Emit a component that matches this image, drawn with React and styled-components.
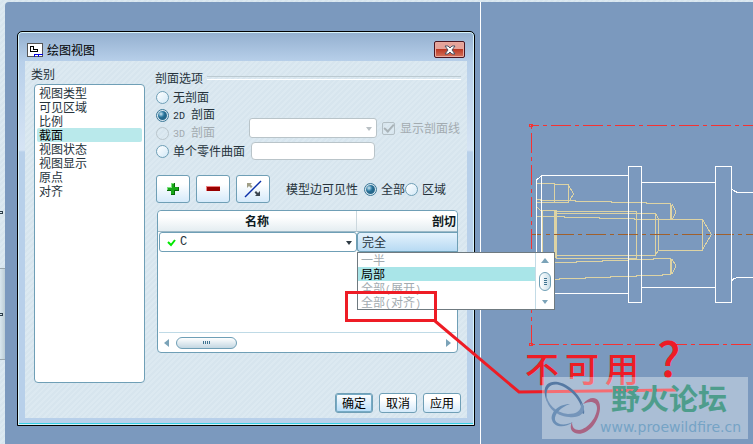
import { useState } from 'react';
import styled, { createGlobalStyle } from 'styled-components';

const categories = ['视图类型', '可见区域', '比例', '截面', '视图状态', '视图显示', '原点', '对齐'];

const cutTypes = [
  { name: '一半', disabled: true },
  { name: '局部' },
  { name: '全部', suffix: '展开', disabled: true },
  { name: '全部', suffix: '对齐', disabled: true },
];

function Radio({ name, value, current, onChange, disabled, children }) {
  return (
    <RadioLabel $disabled={disabled}>
      <RadioInput type="radio" name={name} value={value} disabled={disabled}
        checked={current === value} onChange={() => onChange(value)} />
      <span>{children}</span>
    </RadioLabel>
  );
}

function Arrow({ dir, color = '#7ba3b8' }) {
  const points = {
    left: '6,0 6,8 1,4',
    right: '1,0 1,8 6,4',
    up: '0,6 8,6 4,1',
    down: '1,2 7,2 4,6',
  };
  const flat = dir === 'up' || dir === 'down';
  return (
    <svg width={flat ? 8 : 7} height={flat ? 7 : 8}>
      <polygon points={points[dir]} fill={color} />
    </svg>
  );
}

function Categories() {
  const [active, setActive] = useState('截面');
  return (
    <Side>
      <Caption>类别</Caption>
      <CategoryList>
        {categories.map(item => (
          <li key={item}>
            <CategoryItem type="button" $active={item === active} onClick={() => setActive(item)}>
              {item}
            </CategoryItem>
          </li>
        ))}
      </CategoryList>
    </Side>
  );
}

function SectionOptions() {
  const [section, setSection] = useState('2d');
  return (
    <section>
      <GroupTitle>剖面选项</GroupTitle>
      <OptionsRow>
        <Radios>
          <Radio name="section" value="none" current={section} onChange={setSection}>无剖面</Radio>
          <Radio name="section" value="2d" current={section} onChange={setSection}>
            <Latin>2D </Latin>剖面
          </Radio>
          <Radio name="section" value="3d" current={section} onChange={setSection} disabled>
            <Latin>3D </Latin>剖面
          </Radio>
          <Radio name="section" value="part" current={section} onChange={setSection}>单个零件曲面</Radio>
        </Radios>
        <Fields>
          <FieldLine>
            <SelectBox>
              <Select aria-label="3D 剖面" disabled />
              <Arrow dir="down" color="#b9c0c4" />
            </SelectBox>
            <CheckLabel>
              <CheckInput type="checkbox" defaultChecked disabled />
              显示剖面线
            </CheckLabel>
          </FieldLine>
          <TextInput aria-label="单个零件曲面" disabled />
        </Fields>
      </OptionsRow>
    </section>
  );
}

function Toolbar() {
  const [edges, setEdges] = useState('all');
  return (
    <Tools>
      <ToolButton type="button" aria-label="添加">
        <svg width="14" height="14" shapeRendering="crispEdges">
          <path d="M5 1h4v4h4v4h-4v4h-4v-4h-4v-4h4z" fill="#0a6a0a" />
          <path d="M5 1h3v4h4v3h-4v4h-3v-4h-4v-3h4z" fill="#18a818" />
          <path d="M5 1h3v1h-2v4h-4v2h-1v-3h4z" fill="#7de07d" />
        </svg>
      </ToolButton>
      <ToolButton type="button" aria-label="删除">
        <svg width="14" height="14" shapeRendering="crispEdges">
          <rect y="4" width="14" height="5" fill="#f08080" />
          <rect x="1" y="5" width="13" height="4" fill="#980000" />
        </svg>
      </ToolButton>
      <ToolButton type="button" aria-label="反向">
        <svg width="18" height="18">
          <path d="M1 17L17 1" stroke="#0a2fa8" strokeWidth="1.4" />
          <path d="M3 3h5l-1.500 1.500 2 2-1.500 1.500-2-2L3 8z" fill="#a09e86" />
          <path d="M16 16h-5l1.500-1.500-2-2 1.500-1.500 2 2L16 11z" fill="#3b4650" />
        </svg>
      </ToolButton>
      <ToolCaption>模型边可见性</ToolCaption>
      <Radio name="edges" value="all" current={edges} onChange={setEdges}>全部</Radio>
      <Radio name="edges" value="area" current={edges} onChange={setEdges}>区域</Radio>
    </Tools>
  );
}

function SectionTable() {
  const [cut, setCut] = useState('局部');
  return (
    <Panel>
      <Table>
        <thead>
          <tr>
            <NameHead>名称</NameHead>
            <CutHead>剖切</CutHead>
          </tr>
        </thead>
        <tbody>
          <tr>
            <Cell>
              <NameBox>
                <svg width="9" height="9">
                  <path d="M1 4l3 3 4-5" fill="none" stroke="#00e800" strokeWidth="2" />
                </svg>
                <NameSelect aria-label="名称">
                  <option>C</option>
                </NameSelect>
                <Arrow dir="down" color="#2e3b44" />
              </NameBox>
            </Cell>
            <Cell>
              <CutButton type="button" aria-expanded="true">完全</CutButton>
              <Popup>
                <PopupList>
                  {cutTypes.map(item => (
                    <li key={item.name + item.suffix}>
                      <PopupItem type="button" disabled={item.disabled}
                        $active={!item.disabled && item.name === cut} onClick={() => setCut(item.name)}>
                        {item.name}
                        {item.suffix && <><Latin>(</Latin>{item.suffix}<Latin>)</Latin></>}
                      </PopupItem>
                    </li>
                  ))}
                </PopupList>
                <PopupScroll>
                  <Arrow dir="up" />
                  <ThumbY>
                    <svg width="3" height="9" shapeRendering="crispEdges">
                      <path d="M0 1.500h3M0 3.500h3M0 5.500h3M0 7.500h3" stroke="#3f7390" />
                    </svg>
                  </ThumbY>
                  <Arrow dir="down" />
                </PopupScroll>
              </Popup>
            </Cell>
          </tr>
        </tbody>
      </Table>
      <ScrollX>
        <Arrow dir="left" />
        <ThumbX>
          <svg width="9" height="3" shapeRendering="crispEdges">
            <path d="M1.500 0v3M3.500 0v3M5.500 0v3M7.500 0v3" stroke="#3f7390" />
          </svg>
        </ThumbX>
        <Arrow dir="right" />
      </ScrollX>
    </Panel>
  );
}

function ViewDialog() {
  return (
    <Dialog role="dialog" aria-labelledby="dialog-title">
      <TitleBar>
        <svg width="16" height="14" shapeRendering="crispEdges">
          <rect x="0.500" y="0.500" width="15" height="13" fill="#fff" stroke="#555" />
          <path d="M3.500 3.500h3v3h4v2h-7z" fill="none" stroke="#000" />
          <path d="M7.500 13.500v-2h4v2M11 11.500h5" fill="none" stroke="#0000e0" />
        </svg>
        <DialogTitle id="dialog-title">绘图视图</DialogTitle>
        <CloseButton type="button" aria-label="关闭">
          <svg width="12" height="10">
            <path d="M1 1h3l2 2 2-2h3L8 5l3 4H8L6 7 4 9H1l3-4z" fill="#fff" stroke="#4b5566" />
          </svg>
        </CloseButton>
      </TitleBar>
      <Body>
        <Columns>
          <Categories />
          <Main>
            <SectionOptions />
            <Toolbar />
            <SectionTable />
          </Main>
        </Columns>
        <Footer>
          <FooterButton type="button" $primary>确定</FooterButton>
          <FooterButton type="button">取消</FooterButton>
          <FooterButton type="button">应用</FooterButton>
        </Footer>
      </Body>
    </Dialog>
  );
}

function ShaftDrawing() {
  return (
    <svg width="272" height="442" viewBox="481 2 272 442" fill="none" shapeRendering="crispEdges">
      <g stroke="#ddd3a4">
        <path d="M537 183.500h17v19h-17M554.500 184.500h14v18h-14M537 199.500h3v1h35v1h36v1h35v1h25" />
        <path d="M568.500 185l5 9-4 7M670.500 204v16M671.500 205v14M672 204l4 8-4 8" />
        <path d="M537 207l3 3h14M542.500 210v48M537 216.500h27v1h35v1h35v1h68v31h-44" />
        <path d="M554 211.500h82.500v47H556M556 213.500h99.500v42H556M655.500 213.500l3 5v32l-3 4" />
        <path d="M555.500 210v48" strokeWidth="3" />
        <path d="M702.500 219.500l9 15-9 15" />
        <path d="M555 262.500h21v-1h26v-1h26v-1h25v-1h17.500v16M671.500 259v15M672 259l4 7-4 8" />
        <path d="M670 274.500h-8v1h-26v1h-26v1h-25v1h-26v1h-4" />
      </g>
      <path d="M531 234.500h222" stroke="#a0602c" strokeDasharray="20 4 4 4" strokeDashoffset="9" />
      <g stroke="#fff">
        <path d="M536.500 293v-113l5-4.500h87M541.500 175v118.500h87" />
        <path d="M628.500 169.500v133h13v-136h-13zM641.500 182.500h74M641.500 287.500h74" />
        <path d="M715.500 166.500h16v136h-16zM731.500 189l3 2 3 1.500h16M731.500 281l2-2 4-1.500h16" />
      </g>
      <g stroke="#f53232">
        <path d="M531 125.500h222" strokeDasharray="20 4 4 4" strokeDashoffset="12" />
        <path d="M531.500 125v220" strokeDasharray="20 4 4 4" strokeDashoffset="24" />
        <path d="M531 344.500h222" strokeDasharray="20 4 4 4" strokeDashoffset="24" />
        <rect x="529.500" y="124.500" width="3" height="2" />
        <rect x="529.500" y="343.500" width="3" height="2" />
      </g>
    </svg>
  );
}

function Watermark() {
  return (
    <Mark>
      <svg width="60" height="60">
        <g fillRule="evenodd">
          <path d="M5 25C-1 10 5 3 16 5c15 3 28 20 26 32l-2-1C41 26 30 12 17 8 7 6 3 12 5 25z" fill="#5579a3" />
          <path d="M4 16c1 11 10 20 22 21 8 0 14-3 13-11l3 3c1 9-6 12-15 11C13 39 3 29 4 16z" fill="#7595ba" />
          <path d="M28 27C16 27 8 36 10 43c2 7 12 9 21 2-8 4-16 3-18-2-1-6 6-13 15-16z" fill="#6b8fb6" />
          <path d="M41 27c8-10 18-7 17 5-2 17-16 28-25 24-5-2-5-7-3-11 0 5 2 8 7 8 9-1 18-13 18-22 0-6-6-8-14-4z" fill="#a96483" />
        </g>
      </svg>
      <div>
        <MarkTitle>野火论坛</MarkTitle>
        <MarkLink href="#forum">www.proewildfire.cn</MarkLink>
      </div>
    </Mark>
  );
}

export default function App() {
  return (
    <>
      <GlobalStyle />
      <Page>
        <Rail>
          <RailSection><Grip /></RailSection>
          <RailSection $raised><Grip /></RailSection>
          <RailSection />
        </Rail>
        <Workspace>
          <LeftPane>
            <ViewDialog />
          </LeftPane>
          <ShaftDrawing />
        </Workspace>
        <Callout width="753" height="444">
          <path d="M346.500 292.500h89v28h-89zM435 321l84 71 157-2" />
        </Callout>
        <Note>
          <span>不</span>
          <span>可</span>
          <span>用</span>
          <NoteMark>?</NoteMark>
        </Note>
        <Watermark />
      </Page>
    </>
  );
}

const stripes = 'repeating-linear-gradient(135deg, #dce9f1 0 2px, #d7e5ee 2px 4px)';
const line = '#6f9fb6';

const GlobalStyle = createGlobalStyle`
  * {
    box-sizing: border-box;
  }
  body {
    margin: 0;
    background: #7b99be;
    color: #26333c;
    font: 12px/14px "Noto Sans CJK SC", sans-serif;
  }
  button, input, select {
    font: inherit;
    color: inherit;
    margin: 0;
    padding: 0;
  }
  ul {
    list-style: none;
    margin: 0;
    padding: 0;
  }
  svg {
    display: block;
    flex: none;
  }
`;
const Page = styled.div`
  position: relative;
  display: grid;
  grid-template-columns: 5px 1fr;
  min-height: 100vh;
  padding-top: 2px;
  overflow: hidden;
  background: ${stripes};
`;
const Rail = styled.div`
  display: grid;
  grid-template-rows: 266px 92px 1fr;
`;
const RailSection = styled.div`
  display: flex;
  align-items: ${p => p.$raised ? 'center' : 'flex-end'};
  padding-bottom: ${p => p.$raised ? '0' : '54px'};
  border: solid #9aa7ae;
  border-width: ${p => p.$raised ? '1px 0' : '0'};
  background: ${p => p.$raised ? 'linear-gradient(90deg, #d9e7ee, #bccdd6)' : 'none'};
`;
const Grip = styled.div`
  width: 3px;
  height: 3px;
  border: 1px solid #2c3e4a;
  border-left: 0;
`;
const Workspace = styled.main`
  display: grid;
  grid-template-columns: 476px 1fr;
  border-top-left-radius: 4px;
  background: #7b99be;
`;
const LeftPane = styled.div`
  padding: 29px 5px 0 12px;
  border-right: 1px solid #fff;
`;
const Dialog = styled.section`
  border: 1px solid #000;
  border-radius: 5px 5px 0 0;
  background: linear-gradient(#93afcf, #b8d0ea 30px, #d6e4f4 118px, #b8d0ea 120px);
  box-shadow: inset 0 0 0 1px #d5f2fa, inset 0 -1px 0 1px #37cfe4;
`;
const TitleBar = styled.header`
  display: flex;
  align-items: center;
  gap: 4px;
  height: 29px;
  padding: 6px 9px 0;
`;
const DialogTitle = styled.h1`
  flex: 1;
  margin: 0;
  color: #000;
  font-size: 12px;
  font-weight: 400;
`;
const CloseButton = styled.button`
  display: grid;
  place-items: center;
  width: 31px;
  height: 17px;
  border: 1px solid #4a1520;
  border-radius: 2px;
  background: linear-gradient(#e5a39a 0 45%, #bb3a25 50%, #d5735b);
  box-shadow: inset 0 0 0 1px #e9aaa0;
`;
const Body = styled.div`
  margin: 0 7px 7px;
  padding: 6px 6px 5px;
  background: ${stripes};
`;
const Columns = styled.div`
  display: grid;
  grid-template-columns: 114px 1fr;
  gap: 10px;
`;
const Side = styled.div`
  display: flex;
  flex-direction: column;
`;
const Caption = styled.h2`
  margin: 0 0 3px;
  font-size: 12px;
  font-weight: 400;
`;
const CategoryList = styled.ul`
  height: 299px;
  margin-left: 3px;
  padding: 1px 2px;
  border: 1px solid ${line};
  border-radius: 4px;
  background: #fff;
`;
const CategoryItem = styled.button`
  display: block;
  width: 100%;
  height: 14px;
  padding-left: 2px;
  border: 0;
  border-radius: 2px;
  color: ${p => p.$active ? '#000' : '#26333c'};
  background: ${p => p.$active ? '#b9e9eb' : 'transparent'};
  line-height: 14px;
  text-align: left;
`;
const Main = styled.div`
  padding-top: 4px;
`;
const GroupTitle = styled.h2`
  display: flex;
  align-items: center;
  gap: 4px;
  margin: 0 0 3px;
  font-size: 12px;
  font-weight: 400;

  &::after {
    content: '';
    flex: 1;
    height: 2px;
    border-top: 1px solid #bccad1;
    border-bottom: 1px solid #fff;
  }
`;
const OptionsRow = styled.div`
  display: grid;
  grid-template-columns: 94px 1fr;
`;
const Radios = styled.div`
  display: grid;
  grid-auto-rows: 18px;
  padding-left: 1px;
`;
const RadioLabel = styled.label`
  display: flex;
  align-items: center;
  gap: 4px;
  color: ${p => p.$disabled ? '#a3abb0' : 'inherit'};
  white-space: pre;
`;
const RadioInput = styled.input`
  appearance: none;
  width: 13px;
  height: 13px;
  border: 1px solid ${line};
  border-radius: 50%;
  background: linear-gradient(135deg, #fff, #d3e9f7);

  &:checked {
    background: radial-gradient(circle at 4px 4px, #cfe7f2 0, #2f7ca3 3px, #25688c 4px);
    background-clip: content-box;
    padding: 1px;
    border-color: #3a7797;
  }
  &:disabled {
    border-color: #bac6cc;
    background: transparent;
  }
`;
const Latin = styled.span`
  font: 10px/14px "Liberation Mono", monospace;
`;
const Fields = styled.div`
  display: flex;
  flex-direction: column;
  justify-content: flex-end;
  gap: 4px;
`;
const FieldLine = styled.div`
  display: flex;
  align-items: center;
  gap: 5px;
`;
const SelectBox = styled.div`
  display: flex;
  align-items: center;
  width: 128px;
  height: 20px;
  padding-right: 3px;
  border: 1px solid #b9c4c9;
  border-radius: 3px;
  background: #fff;
`;
const Select = styled.select`
  appearance: none;
  flex: 1;
  min-width: 0;
  border: 0;
  background: transparent;
`;
const CheckLabel = styled.label`
  display: flex;
  align-items: center;
  gap: 5px;
  color: #a3abb0;
  white-space: nowrap;
`;
const CheckInput = styled.input`
  appearance: none;
  display: grid;
  place-items: center;
  width: 13px;
  height: 13px;
  border: 1px solid #b3bfc5;
  border-radius: 2px;

  &:checked::after {
    content: '';
    width: 8px;
    height: 4px;
    margin-bottom: 3px;
    border-left: 2px solid #a9b3b8;
    border-bottom: 2px solid #a9b3b8;
    rotate: -48deg;
  }
`;
const TextInput = styled.input`
  width: 124px;
  height: 18px;
  margin-left: 2px;
  border: 1px solid #b9c4c9;
  border-radius: 4px;
  background: #fff;
`;
const Tools = styled.div`
  display: flex;
  align-items: center;
  gap: 6px;
  margin-top: 15px;
  padding-left: 1px;

  label + label {
    margin-left: -6px;
  }
`;
const ToolButton = styled.button`
  display: grid;
  place-items: center;
  width: 34px;
  height: 28px;
  border: 1px solid ${line};
  border-radius: 3px;
  background: linear-gradient(#fff 30%, #d5eafa);
`;
const ToolCaption = styled.span`
  margin-left: 10px;
  white-space: nowrap;
`;
const Panel = styled.div`
  display: flex;
  flex-direction: column;
  justify-content: space-between;
  height: 143px;
  margin: 7px 3px 0 2px;
  border: 1px solid ${line};
  border-radius: 4px;
  background: #fff;
`;
const Table = styled.table`
  width: 100%;
  border-spacing: 0;
  table-layout: fixed;
`;
const Head = styled.th`
  height: 21px;
  padding: 0;
  border-bottom: 1px solid #9db9c7;
  background: linear-gradient(#fff 30%, #e4edf1);
  color: #0d1a22;
  font-size: 12px;
  line-height: 14px;
`;
const NameHead = styled(Head)`
  width: 199px;
  border-right: 1px solid #ccd8de;
  border-radius: 4px 0 0 0;
`;
const CutHead = styled(Head)`
  padding-right: 1px;
  text-align: right;
  border-radius: 0 4px 0 0;
`;
const Cell = styled.td`
  position: relative;
  padding: 0;
`;
const NameBox = styled.div`
  display: flex;
  align-items: center;
  gap: 4px;
  height: 20px;
  margin-left: 1px;
  padding: 0 3px 0 7px;
  border: 1px solid ${line};
  border-radius: 3px;
`;
const NameSelect = styled.select`
  appearance: none;
  flex: 1;
  min-width: 0;
  height: 14px;
  border: 0;
  background: transparent;
  font: 12px/14px "Liberation Mono", monospace;
`;
const CutButton = styled.button`
  display: block;
  width: 100%;
  height: 20px;
  padding-left: 4px;
  border: 1px solid ${line};
  border-right: 0;
  border-radius: 3px 0 0 3px;
  background: linear-gradient(#e4f2fc, #b7daf3);
  line-height: 14px;
  text-align: left;
`;
const Popup = styled.div`
  position: absolute;
  top: 20px;
  left: 0;
  z-index: 1;
  display: flex;
  width: 198px;
  border: 1px solid #6f7a80;
  background: #fff;
`;
const PopupList = styled.ul`
  flex: 1;
`;
const PopupItem = styled.button`
  display: block;
  width: 100%;
  height: 14px;
  padding-left: 3px;
  border: 0;
  background: ${p => p.$active ? '#a9e5e8' : 'transparent'};
  color: #000;
  line-height: 14px;
  text-align: left;

  &:disabled {
    color: #a3abb0;
  }
`;
const PopupScroll = styled.div`
  display: flex;
  flex-direction: column;
  align-items: center;
  justify-content: space-between;
  width: 19px;
  padding: 4px 0;
  border-left: 1px solid #c3dbe6;
`;
const Thumb = styled.div`
  display: grid;
  place-items: center;
  border: 1px solid ${line};
  border-radius: 6px;
`;
const ThumbY = styled(Thumb)`
  width: 12px;
  height: 19px;
  background: linear-gradient(90deg, #fff, #cbdfe9);
`;
const ThumbX = styled(Thumb)`
  width: 61px;
  height: 12px;
  margin-right: auto;
  background: linear-gradient(#fff, #c3d7e2);
`;
const ScrollX = styled.div`
  display: flex;
  align-items: center;
  gap: 6px;
  height: 20px;
  margin: 0 1px;
  padding: 0 4px;
  border-top: 1px solid #bfdae6;
`;
const Footer = styled.footer`
  display: flex;
  justify-content: flex-end;
  gap: 6px;
  margin-top: 10px;
`;
const FooterButton = styled.button`
  width: 38px;
  height: 20px;
  border: 1px solid ${line};
  border-radius: 3px;
  background: ${p => p.$primary ? 'linear-gradient(#fff, #b5dcf8)' : 'linear-gradient(#fff 30%, #d5eafa)'};
  box-shadow: ${p => p.$primary ? 'inset 0 0 0 1px #76aac4' : 'none'};
  color: #000;
  line-height: 14px;
`;
const Callout = styled.svg`
  position: absolute;
  top: 0;
  left: 0;
  z-index: 2;
  fill: none;
  stroke: #ee1c25;
  stroke-width: 3px;
  pointer-events: none;
`;
const Note = styled.div`
  position: absolute;
  top: 338px;
  left: 525px;
  z-index: 2;
  display: flex;
  gap: 6px;
  color: #ee1c25;
  font-size: 34px;
  font-weight: 500;
  line-height: 60px;
`;
const NoteMark = styled.span`
  margin-left: 12px;
  font-size: 48px;
  line-height: 36px;
`;
const Mark = styled.div`
  position: absolute;
  top: 377px;
  left: 542px;
  z-index: 3;
  display: flex;
  width: 206px;
  height: 62px;
  background: rgba(255, 255, 255, 0.36);
`;
const MarkTitle = styled.div`
  padding-left: 9px;
  color: #4e9d8c;
  font-size: 29px;
  font-weight: 700;
  line-height: 40px;
`;
const MarkLink = styled.a`
  display: block;
  margin-left: -2px;
  color: #75a3c5;
  font: 14px/20px "DejaVu Sans", sans-serif;
  text-decoration: none;
`;
